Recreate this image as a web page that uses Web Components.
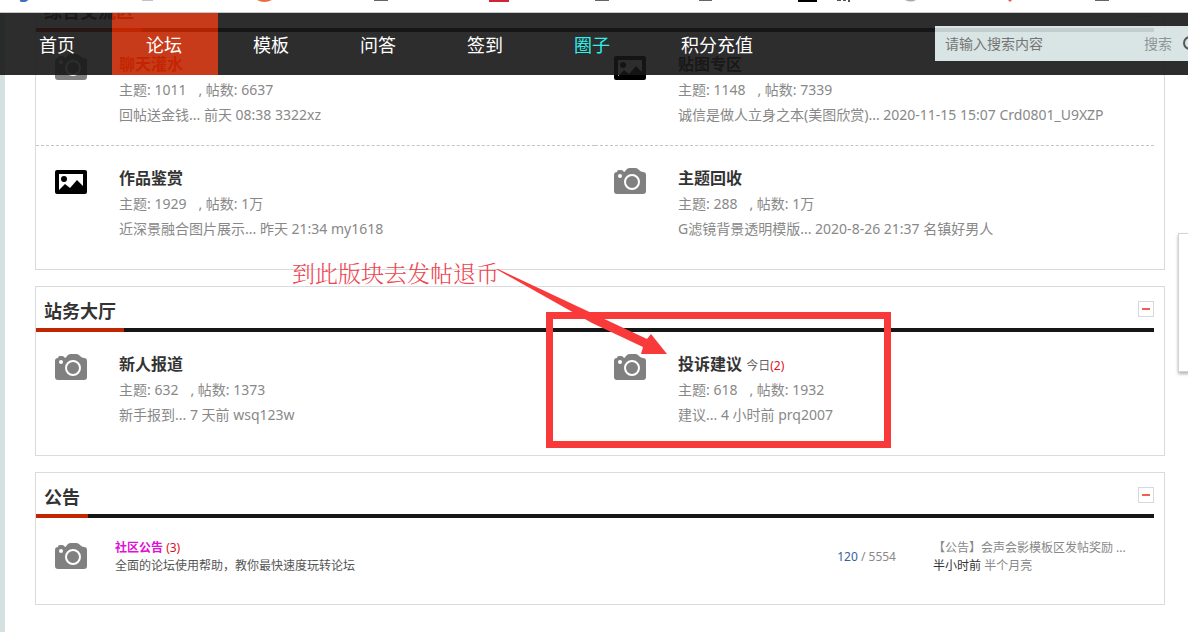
<!DOCTYPE html>
<html lang="zh-CN">
<head>
<meta charset="utf-8">
<title>论坛</title>
<style>
  html, body { margin: 0; height: 100%; overflow: hidden; background: #fff; }
  body { font: 14px/25px "Noto Sans", "Noto Sans CJK SC", sans-serif; color: #888; }
</style>
</head>
<body>
<forum-page>
  <bookmark-strip slot="top"></bookmark-strip>
  <site-nav slot="nav">
    <nav-item>首页</nav-item>
    <nav-item active>论坛</nav-item>
    <nav-item>模板</nav-item>
    <nav-item>问答</nav-item>
    <nav-item>签到</nav-item>
    <nav-item accent>圈子</nav-item>
    <nav-item>积分充值</nav-item>
    <search-box slot="search"></search-box>
  </site-nav>

  <forum-section heading="综合交流区">
    <forum-item divided icon="camera" name="聊天灌水" topics="1011" posts="6637" red>回帖送金钱... 前天 08:38 3322xz</forum-item>
    <forum-item divided icon="picture" name="贴图专区" topics="1148" posts="7339">诚信是做人立身之本(美图欣赏)... 2020-11-15 15:07 Crd0801_U9XZP</forum-item>
    <forum-item icon="picture" name="作品鉴赏" topics="1929" posts="1万">近深景融合图片展示... 昨天 21:34 my1618</forum-item>
    <forum-item icon="camera" name="主题回收" topics="288" posts="1万">G滤镜背景透明模版... 2020-8-26 21:37 名镇好男人</forum-item>
  </forum-section>

  <forum-section heading="站务大厅">
    <forum-item icon="camera" name="新人报道" topics="632" posts="1373">新手报到... 7 天前 wsq123w</forum-item>
    <forum-item icon="camera" name="投诉建议" today="2" topics="618" posts="1932">建议... 4 小时前 prq2007</forum-item>
  </forum-section>

  <forum-section heading="公告" wide>
    <notice-table></notice-table>
  </forum-section>

  <side-float slot="overlay"></side-float>
  <hint-mark slot="overlay">到此版块去发帖退币</hint-mark>
</forum-page>

<script>
const define = (name, html, setup) => {
  const tpl = document.createElement('template');
  tpl.innerHTML = html;
  customElements.define(name, class extends HTMLElement {
    connectedCallback() {
      if (this.shadowRoot) return;
      const root = this.attachShadow({ mode: 'open' });
      root.append(tpl.content.cloneNode(true));
      if (setup) setup(this, root);
    }
  });
};

define('forum-page', `
<style>
  :host { display: flex; flex-direction: column; position: relative; height: 100vh; overflow: hidden; }
  .view { position: relative; flex: 1; min-height: 0; overflow: hidden; border-left: 5px solid #d5e1e1; }
  .nav { position: absolute; top: 13px; left: 0; right: 0; z-index: 2; }
  main { display: flex; flex-direction: column; gap: 16px; margin: -27px 23px 0 30px; }
</style>
<slot name="top"></slot>
<div class="nav"><slot name="nav"></slot></div>
<div class="view"><main><slot></slot></main></div>
<slot name="overlay"></slot>`);

define('bookmark-strip', `
<style>
  :host { display: block; flex: none; height: 12px; background: #fff; border-bottom: 1px solid #c8c8c8; overflow: hidden; }
  svg { display: block; }
</style>
<svg width="1188" height="12" aria-hidden="true">
  <path d="M20 0h8q-1 2-5 2t-3-2z" fill="#3f6fc4"/>
  <path d="M142 0h11v1h-11z" fill="#c9bccf"/>
  <path d="M257 0q7 4 15 0l-2-1h-10z" fill="#ee6a45"/>
  <path d="M374 0h14v1h-14zM595 0h14v1h-14zM699 0h13v1h-13zM1095 0h14v1h-14z" fill="#666"/>
  <path d="M489 0h20v2h-20z" fill="#cf2436"/>
  <path d="M798 0h19v2h-19z" fill="#000"/>
  <path d="M837 0h4v1h-4zM843 0h3v1h-3zM848 0h2v2h-2z" fill="#555"/>
  <path d="M905 0q6 3 11 0z" fill="#aaa"/>
  <path d="M1008 0h4l-2 2z" fill="#e55"/>
</svg>`);

define('site-nav', `
<style>
  :host { display: flex; height: 62px; --bar: rgba(22,22,22,.9); overflow: hidden; }
  .edge { flex: none; width: 5px; background: var(--bar); }
  .fill { flex: 1; background: var(--bar); }
  nav { display: flex; flex: none; }
</style>
<span class="edge"></span><nav><slot></slot></nav><span class="fill"></span><slot name="search"></slot>`);

define('nav-item', `
<style>
  :host { display: block; box-sizing: border-box; min-width: 107px; border-right: 1px solid var(--bar); background: var(--bar); background-clip: padding-box; }
  :host([active]) { background: rgba(194,38,1,.9); background-clip: padding-box; }
  a { display: block; padding: 0 34px; font-size: 18px; line-height: 64px; color: #fff; text-decoration: none; white-space: nowrap; }
  :host([accent]) a { color: #2ff0ea; }
</style>
<a href="#"><slot></slot></a>`);

define('search-box', `
<style>
  :host { display: block; box-sizing: border-box; flex: none; width: 253px; border: solid var(--bar); border-width: 13px 0 14px; background: rgba(213,225,225,.9); background-clip: padding-box; overflow: hidden; }
  form { display: flex; align-items: center; width: 280px; height: 35px; margin: 0; }
  input { box-sizing: border-box; width: 199px; height: 35px; padding: 0 10px; border: 0; background: none; font: inherit; color: #666; outline: 0; }
  input::placeholder { color: #757575; opacity: 1; }
  button { display: flex; align-items: center; gap: 10px; padding: 0 10px; border: 0; background: none; font: inherit; color: #8d9696; white-space: nowrap; }
</style>
<form onsubmit="return false">
  <input type="text" placeholder="请输入搜索内容" aria-label="请输入搜索内容">
  <button type="button">搜索
    <svg width="18" height="18" viewBox="0 0 18 18" fill="none" stroke="#555" stroke-width="2" aria-hidden="true"><circle cx="8" cy="8" r="6"/><path d="M12 12l5 5"/></svg>
  </button>
</form>`);

define('forum-section', `
<style>
  :host { display: block; border: 1px solid #d8dcdc; padding: 0 10px 9px 0; background: #fff; }
  header { display: flex; justify-content: space-between; align-items: center; height: 41px; border-bottom: 4px solid #161616; }
  h2 { box-sizing: border-box; align-self: flex-start; height: 45px; margin: 0 0 -4px; padding: 4px 8px 0; border-bottom: 4px solid #c22601; font-size: 18px; line-height: 40px; color: #333; white-space: nowrap; }
  button { box-sizing: border-box; display: grid; place-items: center; width: 16px; height: 16px; margin-top: 3px; padding: 0; border: 1px solid #d5d9df; background: #fff; }
  button::before { content: ""; width: 8px; height: 2px; background: #ea6150; }
  .grid { display: grid; grid-template-columns: 1fr 1fr; }
  :host([wide]) .grid { display: block; }
</style>
<header><h2></h2><button type="button" aria-label="收起"></button></header>
<div class="grid"><slot></slot></div>`, (el, root) => {
  root.querySelector('h2').textContent = el.getAttribute('heading');
});

define('board-icon', `
<style>
  :host { display: block; width: 32px; height: 32px; }
  svg { display: none; }
  :host([kind="camera"]) .camera, :host([kind="picture"]) .picture { display: block; }
</style>
<svg class="camera" width="32" height="32" viewBox="0 0 32 32" aria-hidden="true">
  <path fill="#808080" d="M3 6q0-2 2-2h2q2 0 3 2 1 0 2-2l1-1q1-1 3-1h5q2 0 3 1l1 1q2 2 4 2 3 0 3 3v16q0 3-3 3H3q-3 0-3-3V9q0-3 3-3z"/>
  <circle cx="6" cy="10" r="2" fill="#fff"/>
  <circle cx="18" cy="16" r="7" fill="none" stroke="#fff" stroke-width="2"/>
</svg>
<svg class="picture" width="32" height="32" viewBox="0 0 32 32" aria-hidden="true">
  <rect y="4" width="32" height="24" rx="2"/>
  <path fill="#fff" d="M4 8h24v12l-6-6-7 8-5-4-6 6z"/>
  <circle cx="9" cy="13" r="3"/>
</svg>`);

define('forum-item', `
<style>
  :host { display: flex; gap: 32px; box-sizing: border-box; height: 114px; padding: 20px 0 0 19px; min-width: 0; }
  :host([divided]) { border-bottom: 1px dashed #c4c4c4; }
  board-icon { flex: none; }
  .text { min-width: 0; white-space: nowrap; }
  h3, p { margin: 0; }
  h3 { height: 25px; font-size: 16px; line-height: 25px; }
  h3 a { color: #333; text-decoration: none; }
  :host([red]) h3 a { color: #c22601; }
  small { font-size: 12px; font-weight: 400; color: #666; }
  b { font-weight: 400; color: #d8121c; }
  .posts { margin-left: 12px; }
</style>
<board-icon></board-icon>
<div class="text">
  <h3><a href="#"></a></h3>
  <p><span class="topics"></span><span class="posts"></span></p>
  <p><slot></slot></p>
</div>`, (el, root) => {
  const get = n => el.getAttribute(n);
  root.querySelector('board-icon').setAttribute('kind', get('icon'));
  root.querySelector('a').textContent = get('name');
  root.querySelector('.topics').textContent = '主题: ' + get('topics');
  root.querySelector('.posts').textContent = ', 帖数: ' + get('posts');
  if (el.hasAttribute('today')) {
    const s = document.createElement('small');
    s.innerHTML = '今日<b>(' + get('today') + ')</b>';
    root.querySelector('h3').append(' ', s);
  }
});

define('notice-table', `
<style>
  :host { display: block; padding: 21px 0 20px; font-size: 12px; line-height: 18px; }
  table { width: 100%; table-layout: fixed; border-collapse: collapse; }
  td { padding: 0; vertical-align: middle; white-space: nowrap; }
  .icon { width: 60px; padding-left: 19px; }
  .count { width: 120px; padding-right: 37px; text-align: right; }
  .last { width: 221px; }
  p { margin: 0; color: #555; }
  a { color: inherit; text-decoration: none; }
  .name { color: #e010d8; font-weight: 700; }
  .new { color: #d8121c; }
  .num { color: #36629c; }
  .when { color: #333; }
  .last p { color: #888; }
</style>
<table><tbody><tr>
  <td class="icon"><board-icon kind="camera"></board-icon></td>
  <td><p><a class="name" href="#">社区公告</a> <span class="new">(3)</span></p><p>全面的论坛使用帮助，教你最快速度玩转论坛</p></td>
  <td class="count"><span class="num">120</span> / 5554</td>
  <td class="last"><p><a href="#">【公告】会声会影模板区发帖奖励 ...</a></p><p><span class="when">半小时前</span> <a href="#">半个月亮</a></p></td>
</tr></tbody></table>`);

define('side-float', `
<style>
  :host { position: absolute; box-sizing: border-box; right: -50px; top: 233px; width: 60px; height: 139px; border: 1px solid #d4d4d4; background: #fff; box-shadow: 0 2px 3px rgba(0,0,0,.3); }
</style>`);

/* Free-hand annotation laid over the page: caption, arrow and frame. */
define('hint-mark', `
<style>
  :host { position: absolute; left: 292px; top: 256px; width: 599px; height: 192px; pointer-events: none; color: #ee4450; }
  span { position: absolute; left: 0; top: 0; font: 300 23px/34px "Noto Serif CJK SC", "Noto Sans CJK SC", serif; white-space: nowrap; }
  .frame { position: absolute; box-sizing: border-box; right: 0; bottom: 0; width: 345px; height: 136px; border: 7px solid #f93a3a; }
  svg { position: absolute; left: 0; top: 0; }
</style>
<span><slot></slot></span>
<div class="frame"></div>
<svg width="599" height="192" aria-hidden="true"><path fill="#f93a3a" d="M204 13L206 13 355 83 359 78 375 98 349 98 351 91 300 67z"/></svg>`);
</script>
</body>
</html>
